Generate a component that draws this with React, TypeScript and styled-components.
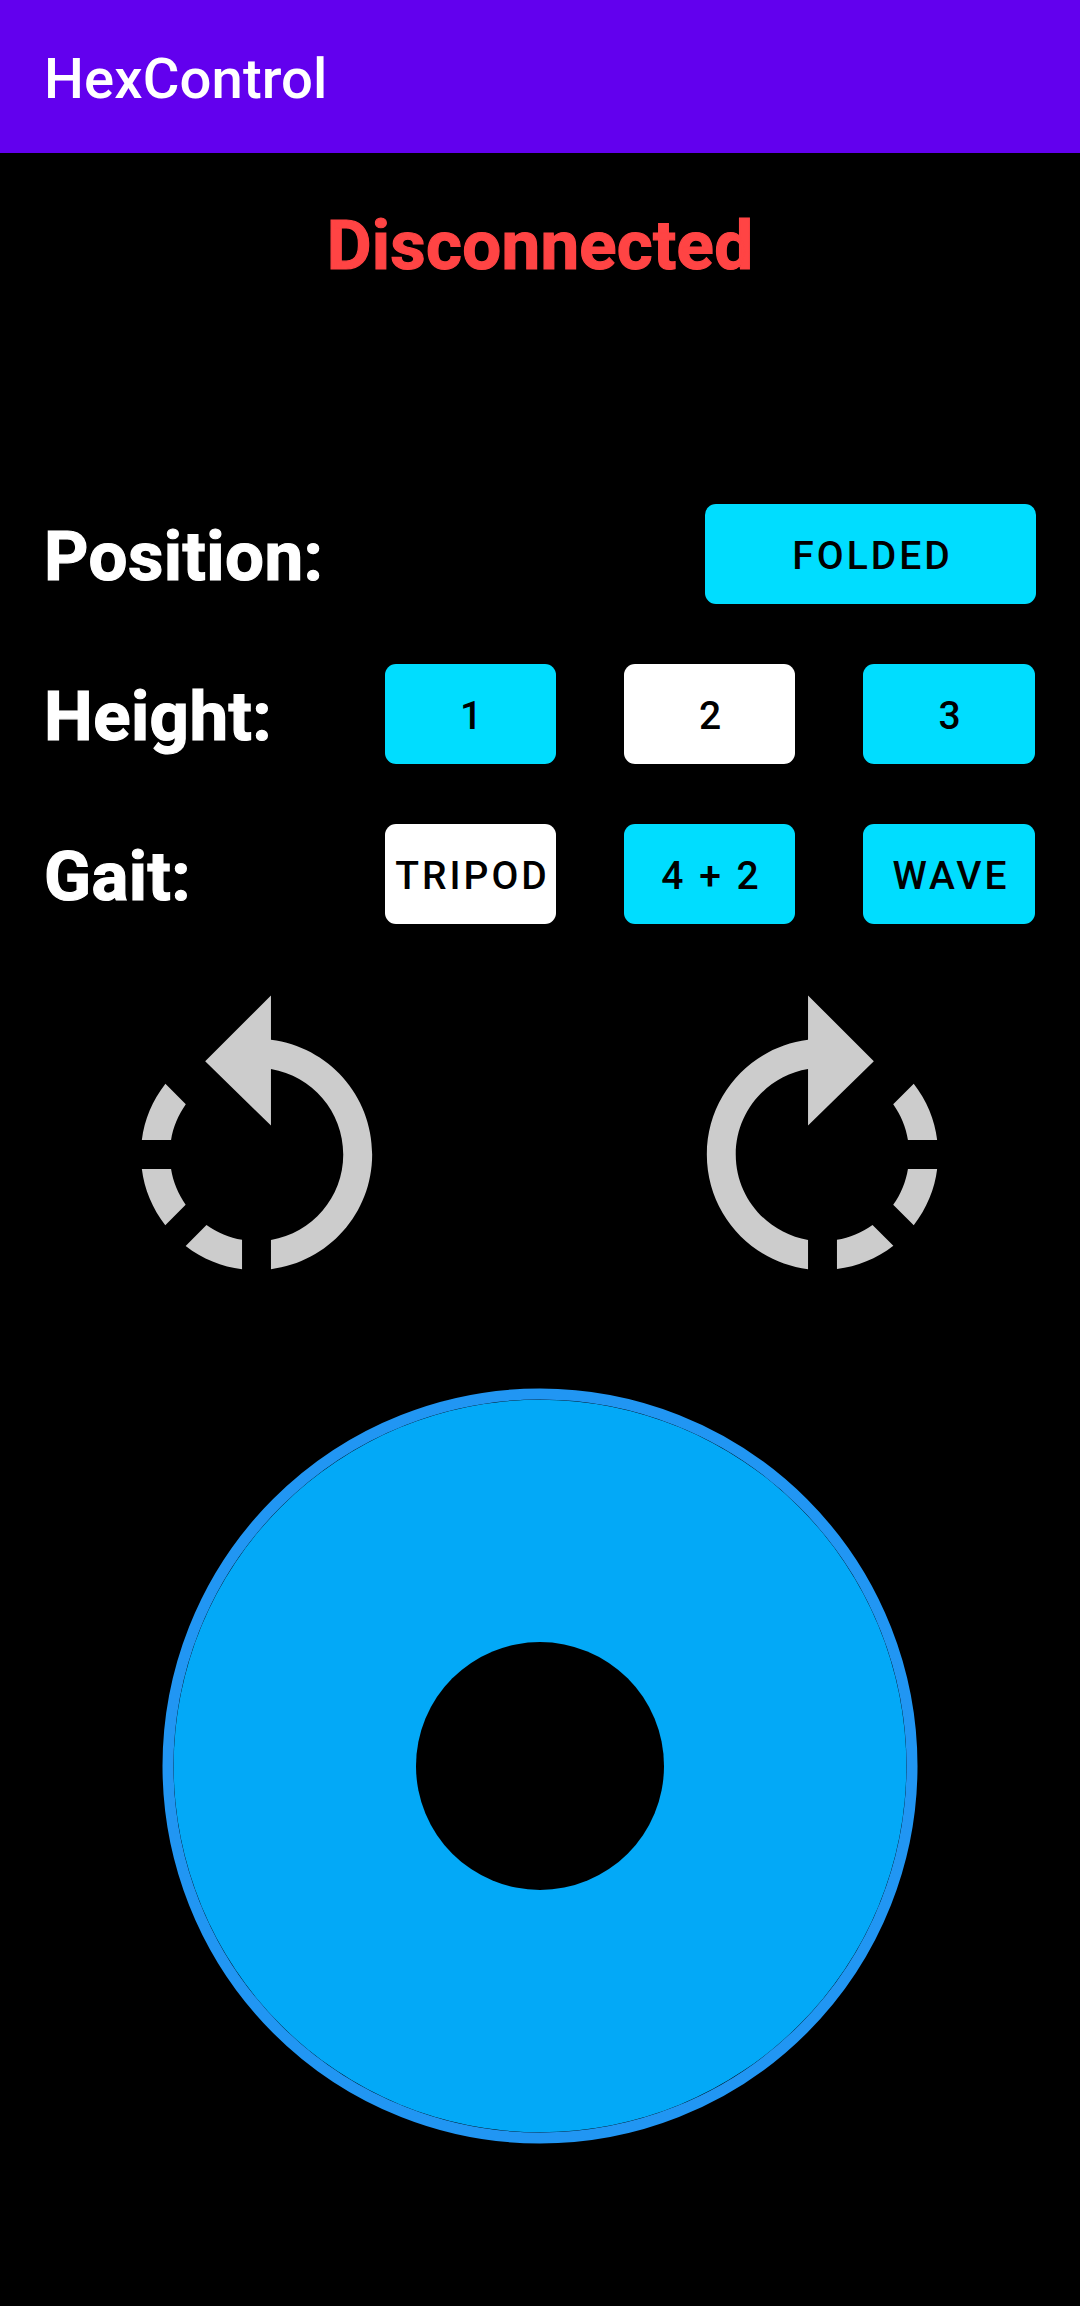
import React, { useState } from 'react';
import styled, { createGlobalStyle } from 'styled-components';

const GlobalStyle = createGlobalStyle`
  * { box-sizing: border-box; }
  body { margin: 0; background: #000; font-family: Roboto, "Liberation Sans", sans-serif; }
`;

const Screen = styled.div`
  display: flex;
  flex-direction: column;
  width: 1080px;
  height: 2306px;
  overflow: hidden;
  background: #000;
`;

const AppBar = styled.header`
  flex: none;
  display: flex;
  align-items: center;
  height: 153px;
  padding: 4px 44px 0;
  background: #6200ee;
`;

const Title = styled.h1`
  margin: 0;
  color: #fff;
  font-size: 56.25px;
  font-weight: 500;
  line-height: 66px;
  letter-spacing: 0.1px;
`;

const Status = styled.div`
  flex: none;
  height: 82px;
  margin-top: 52px;
  color: #ff4444;
  font-size: 69px;
  font-weight: 700;
  line-height: 82px;
  letter-spacing: 0.25px;
  text-align: center;
  -webkit-text-stroke: 1.2px currentColor;
`;

const Controls = styled.main`
  flex: none;
  display: flex;
  flex-direction: column;
  gap: 60px;
  margin-top: 217px;
  padding: 0 44px 0 44px;
`;

const Row = styled.section`
  display: flex;
  align-items: center;
  justify-content: space-between;
  height: 100px;
`;

const Label = styled.h2`
  margin: 0;
  padding-top: 6px;
  color: #fff;
  font-size: 69px;
  font-weight: 700;
  line-height: 82px;
  letter-spacing: 0.45px;
  -webkit-text-stroke: 1.2px currentColor;
`;

const Options = styled.div`
  flex: none;
  display: grid;
  grid-template-columns: 171px 171px 172px;
  gap: 68px;
  width: 650px;
  margin-right: 1px;
`;

const Button = styled.button<{ $active?: boolean; $wide?: boolean }>`
  display: flex;
  align-items: center;
  justify-content: center;
  min-width: 0;
  width: ${(p) => (p.$wide ? '331px' : 'auto')};
  height: 100px;
  padding: 4px 0 0 4px;
  border: 0;
  border-radius: 11px;
  background: ${(p) => (p.$active ? '#fff' : '#00ddff')};
  color: #000;
  font-family: inherit;
  font-size: 39px;
  font-weight: 500;
  letter-spacing: 3px;
  white-space: nowrap;
`;

const Turns = styled.div`
  flex: none;
  display: flex;
  justify-content: space-between;
  margin-top: 56.5px;
  padding: 0 84.25px 0 82.75px;
`;

const TurnIcon = styled.svg`
  display: block;
  width: 347px;
  height: 347px;
  fill: #ccc;
`;

const Joystick = styled.svg`
  flex: none;
  display: block;
  align-self: center;
  width: 756px;
  height: 756px;
  margin-top: 60px;
`;

const ROTATE_LEFT =
  'M7.11 8.53L5.7 7.11C4.8 8.27 4.24 9.61 4.07 11h2.02c.14-.87.49-1.72 1.02-2.47zM6.09 13H4.07c.17 1.39.72 2.73 1.62 3.89l1.41-1.42c-.52-.75-.87-1.59-1.01-2.47zm1.01 5.32c1.16.9 2.51 1.44 3.9 1.61V17.9c-.87-.15-1.71-.49-2.46-1.03L7.1 18.32zM13 4.07V1L8.45 5.55 13 10V6.09c2.84.48 5 2.94 5 5.91s-2.16 5.43-5 5.91v2.02c3.95-.49 7-3.85 7-7.93s-3.05-7.44-7-7.93z';
const ROTATE_RIGHT =
  'M15.55 5.55L11 1v3.07C7.06 4.56 4 7.92 4 12s3.05 7.44 7 7.93v-2.02c-2.84-.48-5-2.94-5-5.91s2.16-5.43 5-5.91V10l4.55-4.45zM19.93 11c-.17-1.39-.72-2.73-1.62-3.89l-1.42 1.42c.54.75.88 1.6 1.02 2.47h2.02zM13 17.9v2.02c1.39-.17 2.74-.71 3.9-1.61l-1.44-1.44c-.75.54-1.59.89-2.46 1.03zm3.89-2.42l1.42 1.41c.9-1.16 1.45-2.5 1.62-3.89h-2.02c-.14.87-.48 1.72-1.02 2.48z';

const HEIGHTS = ['1', '2', '3'];
const GAITS = ['TRIPOD', '4 + 2', 'WAVE'];

interface ChoiceProps {
  label: string;
  items: string[];
  initial: string;
}

function Choice({ label, items, initial }: ChoiceProps) {
  const [selected, setSelected] = useState(initial);
  return (
    <Row>
      <Label>{label}</Label>
      <Options>
        {items.map((item) => (
          <Button key={item} $active={item === selected} onClick={() => setSelected(item)}>
            {item}
          </Button>
        ))}
      </Options>
    </Row>
  );
}

export default function App() {
  return (
    <Screen>
      <GlobalStyle />
      <AppBar>
        <Title>HexControl</Title>
      </AppBar>
      <Status>Disconnected</Status>
      <Controls>
        <Row>
          <Label>Position:</Label>
          <Button $wide>FOLDED</Button>
        </Row>
        <Choice label="Height:" items={HEIGHTS} initial="2" />
        <Choice label="Gait:" items={GAITS} initial="TRIPOD" />
      </Controls>
      <Turns>
        <TurnIcon viewBox="0 0 24 24">
          <path d={ROTATE_LEFT} />
        </TurnIcon>
        <TurnIcon viewBox="0 0 24 24">
          <path d={ROTATE_RIGHT} />
        </TurnIcon>
      </Turns>
      <Joystick viewBox="0 0 756 756">
        <circle cx="378" cy="378" r="366.35" fill="#03a9f7" />
        <circle cx="378" cy="378" r="372" fill="none" stroke="#2196f3" strokeWidth="11" />
        <circle cx="378" cy="378" r="124" fill="#000" />
      </Joystick>
    </Screen>
  );
}
